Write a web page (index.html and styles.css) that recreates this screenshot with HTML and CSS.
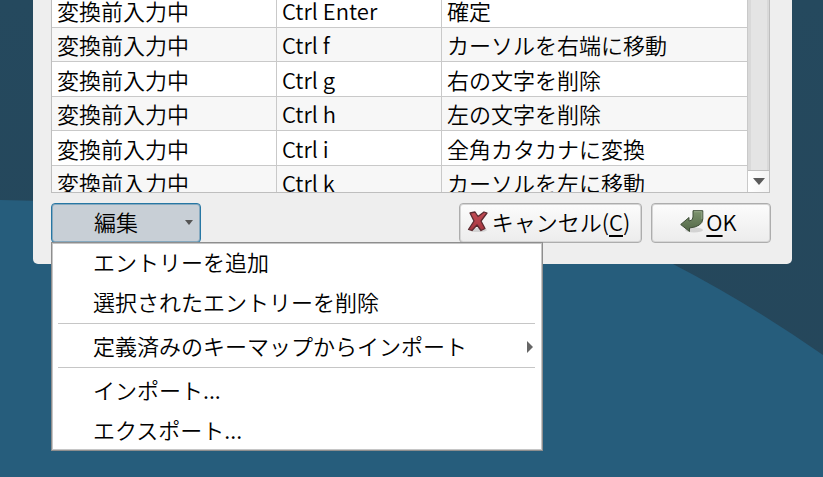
FILE: index.html
```html
<!DOCTYPE html>
<html lang="ja">
<head>
<meta charset="utf-8">
<title>キーマップの編集</title>
<link rel="stylesheet" href="styles.css">
</head>
<body>
<svg class="wallpaper" viewBox="0 0 823 477" preserveAspectRatio="none" aria-hidden="true">
  <defs>
    <linearGradient id="night" x1="0" y1="0" x2="0" y2="1">
      <stop offset="0" stop-color="#25495e"/>
      <stop offset="1" stop-color="#25465a"/>
    </linearGradient>
  </defs>
  <rect width="823" height="477" fill="url(#night)"/>
  <path d="M0 200Q350 205 673 264Q750 304 823 355V477H0Z" fill="#265d7c"/>
</svg>
<main class="dialog">
  <div class="list">
    <div class="list-view">
      <table class="keymap">
        <colgroup><col class="col-mode"><col class="col-key"><col></colgroup>
        <tbody>
          <tr><td>変換前入力中</td><td>Ctrl Enter</td><td>確定</td></tr>
          <tr><td>変換前入力中</td><td>Ctrl f</td><td>カーソルを右端に移動</td></tr>
          <tr><td>変換前入力中</td><td>Ctrl g</td><td>右の文字を削除</td></tr>
          <tr><td>変換前入力中</td><td>Ctrl h</td><td>左の文字を削除</td></tr>
          <tr><td>変換前入力中</td><td>Ctrl i</td><td>全角カタカナに変換</td></tr>
          <tr><td>変換前入力中</td><td>Ctrl k</td><td>カーソルを左に移動</td></tr>
        </tbody>
      </table>
    </div>
    <div class="scrollbar">
      <div class="track"></div>
      <button class="step" type="button" aria-label="下へスクロール"><svg width="12" height="7" viewBox="0 0 12 7"><path d="M0 0H12L6 7Z" fill="#5b5b5b"/></svg></button>
    </div>
  </div>
  <div class="actions">
    <div class="edit">
      <button class="button edit-button" type="button" aria-haspopup="menu" aria-expanded="true"><span>編集</span><svg width="8" height="5" viewBox="0 0 8 5"><path d="M0 0H8L4 5Z" fill="#555"/></svg></button>
      <div class="menu" role="menu">
        <button class="item" type="button" role="menuitem"><span>エントリーを追加</span></button>
        <button class="item" type="button" role="menuitem"><span>選択されたエントリーを削除</span></button>
        <hr class="separator">
        <button class="item" type="button" role="menuitem"><span>定義済みのキーマップからインポート</span><svg width="6" height="12" viewBox="0 0 6 12"><path d="M0 0L6 6L0 12Z" fill="#666"/></svg></button>
        <hr class="separator">
        <button class="item" type="button" role="menuitem"><span>インポート...</span></button>
        <button class="item" type="button" role="menuitem"><span>エクスポート...</span></button>
      </div>
    </div>
    <button class="button cancel" type="button"><svg width="24" height="24" viewBox="0 0 24 24">
      <defs><linearGradient id="red" x1="0" y1="0" x2="0" y2="1"><stop offset="0" stop-color="#c24c55"/><stop offset="1" stop-color="#a5363f"/></linearGradient></defs>
      <ellipse cx="12" cy="20" rx="9" ry="2" fill="#000" opacity=".12"/>
      <path d="M4 3L9 2L12 6.500L18 2L21 3L15 11L19 18.500L15 20.500L11 15L6 20.500L2.500 19.500L8 11Z" fill="url(#red)" stroke="#5b2a30" stroke-width="1.300" stroke-linejoin="round"/>
    </svg><span>キャンセル(<u>C</u>)</span></button>
    <button class="button ok" type="button"><svg width="24" height="24" viewBox="0 0 24 24">
      <defs><linearGradient id="green" x1="0" y1="0" x2="0" y2="1"><stop offset="0" stop-color="#7d936f"/><stop offset="1" stop-color="#526746"/></linearGradient></defs>
      <ellipse cx="14" cy="20" rx="9" ry="2.500" fill="#000" opacity=".12"/>
      <path d="M13 .7H22.800V9Q22.500 16.500 9.500 18V21.500L.7 14.500L9 7.500V11Q13 11 13 7Z" fill="url(#green)" stroke="#3f4e38" stroke-width="1" stroke-linejoin="round"/>
      <path d="M14 1.700H21.800V9" fill="none" stroke="#93a687" stroke-width="1"/>
    </svg><span><u>O</u>K</span></button>
  </div>
</main>
</body>
</html>
```
FILE: styles.css
```css
* { box-sizing: border-box; }

body {
  margin: 0;
  min-height: 100vh;
  overflow: hidden;
  background: #265d7c;
  color: #000;
  font: 350 22px/32px "Noto Sans CJK JP", sans-serif;
}

button { font: inherit; color: inherit; }

.wallpaper {
  position: absolute;
  inset: 0;
  width: 100%;
  height: 100%;
}

.dialog {
  position: relative;
  margin: 0 31px 0 33px;
  padding: 0 21px 21px 18px;
  border-radius: 0 0 5px 5px;
  background: #eee;
}

.list {
  display: flex;
  height: 193px;
  margin-right: 1px;
  border: solid #bebebe;
  border-width: 0 1px 1px;
}

.list-view {
  flex: 1;
  overflow: hidden;
  background: #fff;
}

.keymap {
  width: 100%;
  margin-top: -7px;
  table-layout: fixed;
  border-collapse: separate;
  border-spacing: 0;
}

.col-mode { width: 225px; }
.col-key { width: 165px; }

.keymap td {
  height: 35px;
  padding: 0 5px 1px;
  border: solid #c9c9c9;
  border-width: 0 1px 1px 0;
  white-space: nowrap;
}

.keymap tr:nth-child(even) td {
  height: 34px;
  background: #f7f7f7;
}

.scrollbar {
  display: flex;
  flex-direction: column;
  width: 21px;
  background: #d9d9d9;
}

.track {
  flex: 1;
  margin: 0 2px 0 3px;
  background: #e4e4e4;
}

.step {
  display: grid;
  place-items: center;
  height: 22px;
  padding: 0;
  border: 0;
  border-top: 1px solid #bebebe;
  background: linear-gradient(90deg, #fff, #f4f4f4);
}

.actions {
  display: flex;
  gap: 9px;
  margin-top: 10px;
}

.edit {
  position: relative;
  margin-right: auto;
}

.button {
  display: flex;
  align-items: center;
  justify-content: center;
  height: 40px;
  padding: 0;
  border: 1px solid #adadad;
  border-radius: 4px;
  background: linear-gradient(#fcfcfc, #ececec);
  box-shadow: inset 0 0 0 1px #d6d6d6;
}

.button span,
.item span {
  padding-bottom: 5px;
}

.button u {
  text-underline-offset: 4px;
  text-decoration-thickness: 2px;
}

.edit-button {
  width: 150px;
  justify-content: space-between;
  padding: 0 7px 0 42px;
  border-color: #2777a4;
  background: #c8cfd6;
  box-shadow: inset 0 0 0 1px #86a9bf;
}

.edit-button svg { margin-bottom: 2px; }

.cancel,
.ok {
  gap: 2px;
  padding-right: 5px;
}

.cancel { width: 183px; }
.ok { width: 120px; }

.cancel svg,
.ok svg { margin-bottom: 2px; }

.menu {
  position: absolute;
  top: 100%;
  left: 0;
  width: 492px;
  margin-top: -1px;
  padding: 1px 8px 0 7px;
  background: #fff;
  box-shadow: inset 0 0 0 1px #8e8e8e, inset 0 0 0 2px #c6c6c6;
}

.item {
  display: flex;
  align-items: center;
  justify-content: space-between;
  width: 100%;
  height: 40px;
  padding: 0 2px 0 35px;
  border: 0;
  background: none;
}

.separator {
  height: 1px;
  margin: 0 0 3px;
  border: 0;
  background: #c6c6c6;
}
```
